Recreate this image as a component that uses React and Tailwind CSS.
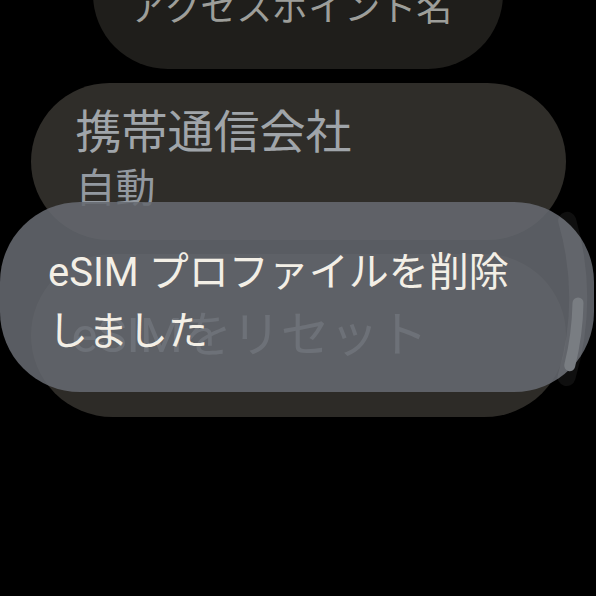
import React from 'react'

const font = { fontFamily: 'Roboto, "Noto Sans CJK JP", sans-serif' }

// track + thumb along the round watch edge
function ScrollArc() {
  return (
    <svg className="absolute inset-0 pointer-events-none" width="596" height="596" viewBox="0 0 596 596">
      <path d="M567.2 220.8 A280 280 0 0 1 566.6 377" fill="none" stroke="rgba(255,255,255,0.06)" strokeWidth="18" strokeLinecap="round" />
      <path d="M578 302.9 A280 280 0 0 1 569.7 365.7" fill="none" stroke="#797d82" strokeWidth="11" strokeLinecap="round" />
    </svg>
  )
}

export default function App() {
  return (
    <div className="relative w-[596px] h-[596px] bg-black overflow-hidden" style={font}>
      <div className="flex flex-col items-center gap-[14px] mt-[-81px]">
        <div className="w-[410px] h-[150px] rounded-full bg-[#1f1e1b] flex items-end pb-[38px] pl-[37px]">
          <span className="text-[36px] leading-[44px] text-[#9d9e9a]">アクセスポイント名</span>
        </div>

        <div className="w-[535px] h-[157px] rounded-full bg-[#2f2d29] flex flex-col pt-[22px] pl-[45px]">
          <span className="text-[46px] leading-[54px] text-[#a0a5aa]">携帯通信会社</span>
          <span className="text-[40px] leading-[60px] text-[#9399a0]">自動</span>
        </div>

        <div className="w-[535px] h-[163px] rounded-full bg-[#2d2b27] flex items-center pl-[41px]">
          <span className="text-[49px] leading-[56px] text-[#9ea3a8]">eSIMをリセット</span>
        </div>
      </div>

      {/* toast */}
      <div className="absolute left-0 top-[202px] w-[594px] h-[190px] rounded-[80px] bg-[rgba(102,106,113,0.87)] pl-[48px] pt-[41px]">
        <p className="text-[40px] leading-[59px] text-[#f3efe6]">
          eSIM プロファイルを削除
          <br />
          しました
        </p>
      </div>

      <ScrollArc />
    </div>
  )
}
